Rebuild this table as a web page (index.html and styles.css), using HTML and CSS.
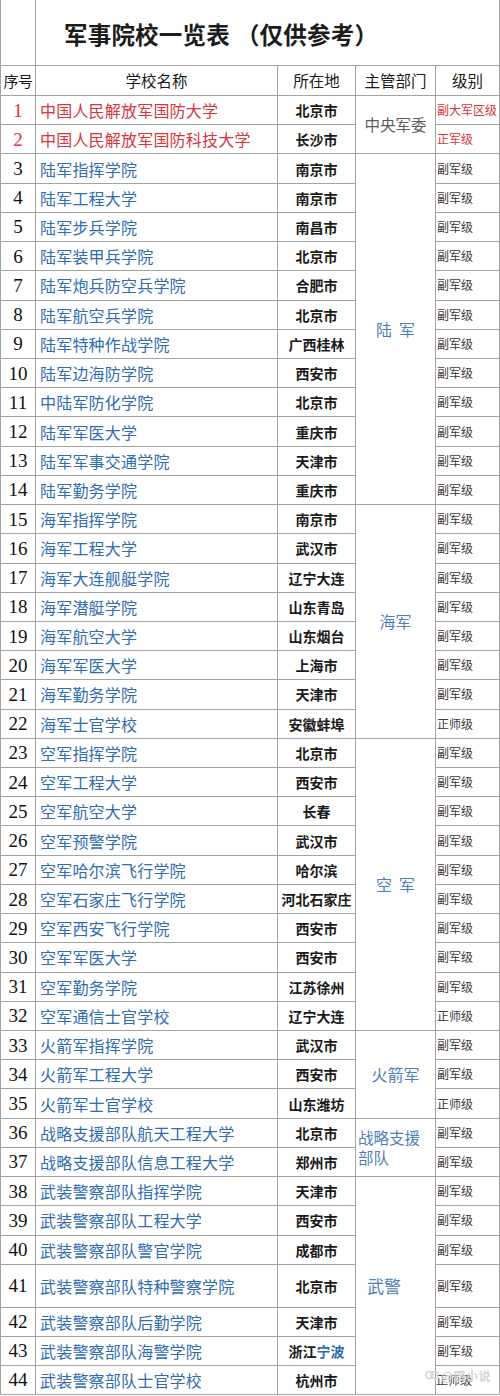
FILE: index.html
```html
<!DOCTYPE html>
<html lang="zh-CN">
<head>
<meta charset="utf-8">
<title>军事院校一览表</title>
<link rel="stylesheet" href="styles.css">
</head>
<body>
<div class="sheet">
  <div class="c blank"></div>
  <div class="c title">军事院校一览表 <span class="paren">（仅供参考）</span></div>

  <div class="c hd seq-hd">序号</div>
  <div class="c hd">学校名称</div>
  <div class="c hd">所在地</div>
  <div class="c hd">主管部门</div>
  <div class="c hd">级别</div>

  <div class="c seq red">1</div><div class="c name red">中国人民解放军国防大学</div><div class="c loc">北京市</div><div class="c dept gray span2">中央军委</div><div class="c lvl red">副大军区级</div>
  <div class="c seq red">2</div><div class="c name red">中国人民解放军国防科技大学</div><div class="c loc">长沙市</div><div class="c lvl red">正军级</div>

  <div class="c seq">3</div><div class="c name">陆军指挥学院</div><div class="c loc">南京市</div><div class="c dept span12">陆&nbsp;&nbsp;军</div><div class="c lvl">副军级</div>
  <div class="c seq">4</div><div class="c name">陆军工程大学</div><div class="c loc">南京市</div><div class="c lvl">副军级</div>
  <div class="c seq">5</div><div class="c name">陆军步兵学院</div><div class="c loc">南昌市</div><div class="c lvl">副军级</div>
  <div class="c seq">6</div><div class="c name">陆军装甲兵学院</div><div class="c loc">北京市</div><div class="c lvl">副军级</div>
  <div class="c seq">7</div><div class="c name">陆军炮兵防空兵学院</div><div class="c loc">合肥市</div><div class="c lvl">副军级</div>
  <div class="c seq">8</div><div class="c name">陆军航空兵学院</div><div class="c loc">北京市</div><div class="c lvl">副军级</div>
  <div class="c seq">9</div><div class="c name">陆军特种作战学院</div><div class="c loc">广西桂林</div><div class="c lvl">副军级</div>
  <div class="c seq">10</div><div class="c name">陆军边海防学院</div><div class="c loc">西安市</div><div class="c lvl">副军级</div>
  <div class="c seq">11</div><div class="c name">中陆军防化学院</div><div class="c loc">北京市</div><div class="c lvl">副军级</div>
  <div class="c seq">12</div><div class="c name">陆军军医大学</div><div class="c loc">重庆市</div><div class="c lvl">副军级</div>
  <div class="c seq">13</div><div class="c name">陆军军事交通学院</div><div class="c loc">天津市</div><div class="c lvl">副军级</div>
  <div class="c seq">14</div><div class="c name">陆军勤务学院</div><div class="c loc">重庆市</div><div class="c lvl">副军级</div>

  <div class="c seq">15</div><div class="c name">海军指挥学院</div><div class="c loc">南京市</div><div class="c dept span8">海军</div><div class="c lvl">副军级</div>
  <div class="c seq">16</div><div class="c name">海军工程大学</div><div class="c loc">武汉市</div><div class="c lvl">副军级</div>
  <div class="c seq">17</div><div class="c name">海军大连舰艇学院</div><div class="c loc">辽宁大连</div><div class="c lvl">副军级</div>
  <div class="c seq">18</div><div class="c name">海军潜艇学院</div><div class="c loc">山东青岛</div><div class="c lvl">副军级</div>
  <div class="c seq">19</div><div class="c name">海军航空大学</div><div class="c loc">山东烟台</div><div class="c lvl">副军级</div>
  <div class="c seq">20</div><div class="c name">海军军医大学</div><div class="c loc">上海市</div><div class="c lvl">副军级</div>
  <div class="c seq">21</div><div class="c name">海军勤务学院</div><div class="c loc">天津市</div><div class="c lvl">副军级</div>
  <div class="c seq">22</div><div class="c name">海军士官学校</div><div class="c loc">安徽蚌埠</div><div class="c lvl">正师级</div>

  <div class="c seq">23</div><div class="c name">空军指挥学院</div><div class="c loc">北京市</div><div class="c dept span10">空&nbsp;&nbsp;军</div><div class="c lvl">副军级</div>
  <div class="c seq">24</div><div class="c name">空军工程大学</div><div class="c loc">西安市</div><div class="c lvl">副军级</div>
  <div class="c seq">25</div><div class="c name">空军航空大学</div><div class="c loc">长春</div><div class="c lvl">副军级</div>
  <div class="c seq">26</div><div class="c name">空军预警学院</div><div class="c loc">武汉市</div><div class="c lvl">副军级</div>
  <div class="c seq">27</div><div class="c name">空军哈尔滨飞行学院</div><div class="c loc">哈尔滨</div><div class="c lvl">副军级</div>
  <div class="c seq">28</div><div class="c name">空军石家庄飞行学院</div><div class="c loc">河北石家庄</div><div class="c lvl">副军级</div>
  <div class="c seq">29</div><div class="c name">空军西安飞行学院</div><div class="c loc">西安市</div><div class="c lvl">副军级</div>
  <div class="c seq">30</div><div class="c name">空军军医大学</div><div class="c loc">西安市</div><div class="c lvl">副军级</div>
  <div class="c seq">31</div><div class="c name">空军勤务学院</div><div class="c loc">江苏徐州</div><div class="c lvl">副军级</div>
  <div class="c seq">32</div><div class="c name">空军通信士官学校</div><div class="c loc">辽宁大连</div><div class="c lvl">正师级</div>

  <div class="c seq">33</div><div class="c name">火箭军指挥学院</div><div class="c loc">武汉市</div><div class="c dept span3">火箭军</div><div class="c lvl">副军级</div>
  <div class="c seq">34</div><div class="c name">火箭军工程大学</div><div class="c loc">西安市</div><div class="c lvl">副军级</div>
  <div class="c seq">35</div><div class="c name">火箭军士官学校</div><div class="c loc">山东潍坊</div><div class="c lvl">正师级</div>

  <div class="c seq">36</div><div class="c name">战略支援部队航天工程大学</div><div class="c loc">北京市</div><div class="c dept span2 wrap">战略支援<br>部队</div><div class="c lvl">副军级</div>
  <div class="c seq">37</div><div class="c name">战略支援部队信息工程大学</div><div class="c loc">郑州市</div><div class="c lvl">副军级</div>

  <div class="c seq">38</div><div class="c name">武装警察部队指挥学院</div><div class="c loc">天津市</div><div class="c dept span7 wj">武警</div><div class="c lvl">副军级</div>
  <div class="c seq">39</div><div class="c name">武装警察部队工程大学</div><div class="c loc">西安市</div><div class="c lvl">副军级</div>
  <div class="c seq">40</div><div class="c name">武装警察部队警官学院</div><div class="c loc">成都市</div><div class="c lvl">副军级</div>
  <div class="c seq">41</div><div class="c name">武装警察部队特种警察学院</div><div class="c loc">北京市</div><div class="c lvl">副军级</div>
  <div class="c seq">42</div><div class="c name">武装警察部队后勤学院</div><div class="c loc">天津市</div><div class="c lvl">副军级</div>
  <div class="c seq">43</div><div class="c name">武装警察部队海警学院</div><div class="c loc">浙江<span class="blue">宁波</span></div><div class="c lvl">副军级</div>
  <div class="c seq">44</div><div class="c name">武装警察部队士官学校</div><div class="c loc">杭州市</div><div class="c lvl last">正师级</div>

  <div class="watermark"><svg class="wm-icon" width="14" height="12" viewBox="0 0 14 12"><circle cx="4.5" cy="6" r="3.5" fill="none" stroke="#d2d2d2" stroke-width="1.4"/><circle cx="9.5" cy="6" r="3.5" fill="none" stroke="#d2d2d2" stroke-width="1.4"/></svg>@四小说</div>
</div>
</body>
</html>
```

FILE: styles.css
```css
html, body {
  margin: 0;
  padding: 0;
  background: #ffffff;
}

.sheet {
  position: relative;
  width: 500px;
  box-sizing: border-box;
  display: grid;
  grid-template-columns: 34px 241px 77px 79px 63px;
  grid-template-rows: 65px 29px repeat(40, 28.225px) 42px repeat(3, 28px);
  gap: 1px;
  padding: 0 1px 1px 1px;
  background: #a3a3a3;
  font-family: "Noto Sans CJK SC", "Noto Sans", sans-serif;
  color: #111;
}

.c {
  background: #ffffff;
  display: flex;
  align-items: center;
  overflow: hidden;
  white-space: nowrap;
  line-height: 1;
}

.title {
  grid-column: span 4;
  padding: 5px 0 0 28px;
  font-size: 23.5px;
  font-weight: 700;
  color: #1c1c1c;
  letter-spacing: 0.2px;
}

.paren {
  margin-left: 6px;
}

.hd {
  justify-content: center;
  font-size: 15.5px;
  color: #1a1a1a;
}

.seq-hd {
  font-size: 15px;
  letter-spacing: -0.5px;
}

.seq {
  justify-content: center;
  font-family: "Liberation Serif", "Times New Roman", serif;
  font-size: 19px;
  color: #111;
}

.name {
  padding-left: 4px;
  font-size: 16px;
  color: #2f6cb0;
  letter-spacing: 0.2px;
}

.loc {
  justify-content: center;
  font-size: 14px;
  font-weight: 700;
  color: #1a1a1a;
}

.blue {
  color: #2f6cb0;
}

.dept {
  justify-content: center;
  font-size: 16px;
  color: #4f7fb8;
}

.dept.gray {
  color: #5e5e5e;
  font-size: 15.5px;
}

.dept.wrap {
  justify-content: flex-start;
  padding-left: 2px;
  font-size: 15.5px;
  line-height: 20px;
  white-space: normal;
}

.dept.wj {
  justify-content: flex-start;
  padding-left: 11px;
  font-size: 17px;
}

.span2 { grid-row: span 2; }
.span3 { grid-row: span 3; }
.span7 { grid-row: span 7; }
.span8 { grid-row: span 8; }
.span10 { grid-row: span 10; }
.span12 { grid-row: span 12; }

.lvl {
  padding-left: 1px;
  font-size: 12px;
  color: #3a3a3a;
}

.lvl.last {
  padding-left: 0;
}

.red,
.lvl.red,
.name.red,
.seq.red {
  color: #d8353c;
}

.watermark {
  position: absolute;
  right: 9px;
  bottom: 11px;
  display: flex;
  align-items: center;
  gap: 2px;
  font-size: 12px;
  font-weight: 700;
  color: rgba(205, 205, 205, 0.85);
  text-shadow: 0 0 2px rgba(255, 255, 255, 0.6);
  letter-spacing: 0.5px;
}

.wm-icon {
  display: block;
}
```
